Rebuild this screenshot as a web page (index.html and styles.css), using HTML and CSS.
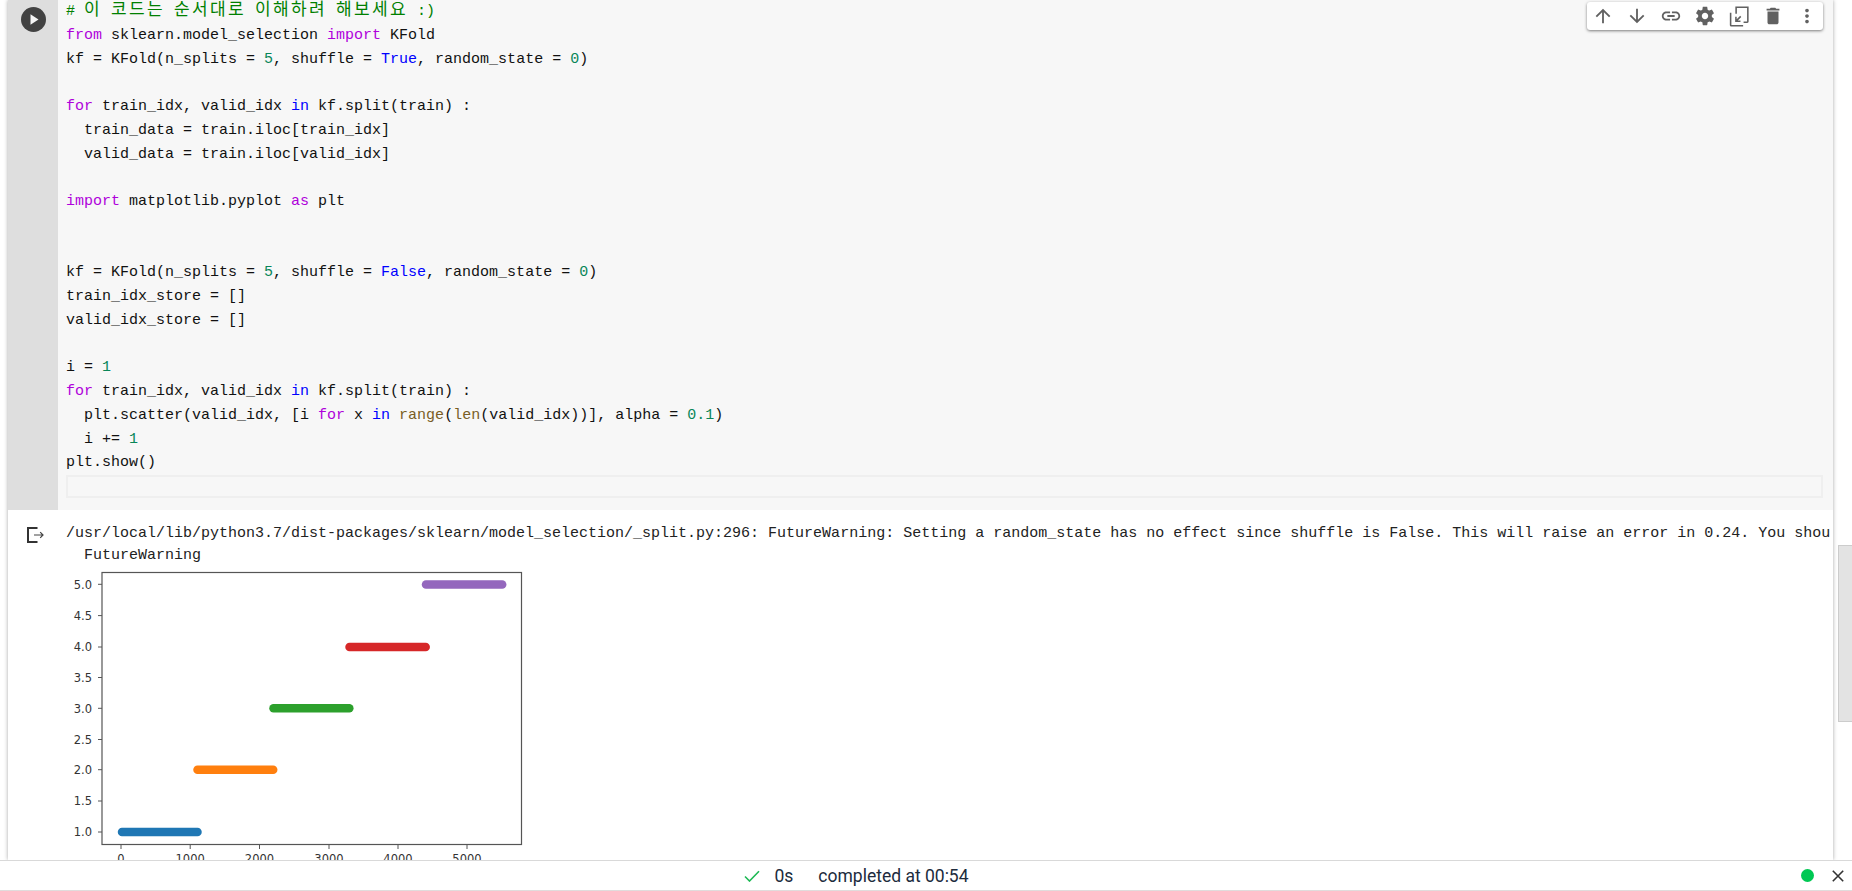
FILE: index.html
```html
<!DOCTYPE html>
<html lang="ko">
<head>
<meta charset="utf-8">
<title>Colab cell</title>
<link rel="stylesheet" href="styles.css">
</head>
<body>
<div class="main">
  <div class="cell">
    <div class="code-row">
      <div class="gutter">
        <button class="play" aria-label="Run cell">
          <svg viewBox="0 0 24 24" width="25" height="25"><circle cx="12" cy="12" r="12" fill="#424242"/><path d="M9.100 7v10l7.700-5z" fill="#f5f5f5"/></svg>
        </button>
      </div>
      <div class="editor">
<pre class="code"><span class="c"># <span class="h">이</span> <span class="h">코드는</span> <span class="h">순서대로</span> <span class="h">이해하려</span> <span class="h">해보세요</span> :)</span>
<span class="k">from</span> sklearn.model_selection <span class="k">import</span> KFold
kf = KFold(n_splits = <span class="n">5</span>, shuffle = <span class="b">True</span>, random_state = <span class="n">0</span>)

<span class="k">for</span> train_idx, valid_idx <span class="b">in</span> kf.split(train) :
  train_data = train.iloc[train_idx]
  valid_data = train.iloc[valid_idx]

<span class="k">import</span> matplotlib.pyplot <span class="k">as</span> plt


kf = KFold(n_splits = <span class="n">5</span>, shuffle = <span class="b">False</span>, random_state = <span class="n">0</span>)
train_idx_store = []
valid_idx_store = []

i = <span class="n">1</span>
<span class="k">for</span> train_idx, valid_idx <span class="b">in</span> kf.split(train) :
  plt.scatter(valid_idx, [i <span class="k">for</span> x <span class="b">in</span> <span class="f">range</span>(<span class="f">len</span>(valid_idx))], alpha = <span class="n">0.1</span>)
  i += <span class="n">1</span>
plt.show()</pre>
        <div class="empty-line"></div>
      </div>
    </div>
    <div class="output-row">
      <div class="output-icon">
        <svg viewBox="0 0 18 16" width="18" height="16"><path d="M10.500 1H1v14h9.500" fill="none" stroke="#333" stroke-width="2"/><path d="M7 8h9M13.200 5.200 16 8l-2.800 2.800" fill="none" stroke="#444" stroke-width="1.200"/></svg>
      </div>
      <div class="output">
<pre class="out">/usr/local/lib/python3.7/dist-packages/sklearn/model_selection/_split.py:296: FutureWarning: Setting a random_state has no effect since shuffle is False. This will raise an error in 0.24. You shou
  FutureWarning</pre>
        <svg class="chart" viewBox="66 566 480 300" width="480" height="300">
          <rect x="102" y="573.500" width="419.500" height="272" fill="#fff" stroke="#555" stroke-width="1.200"/>
          <g class="ticks">
            <path d="M98 585.300h4M98 616.600h4M98 648h4M98 678.500h4M98 709.300h4M98 740.500h4M98 770.700h4M98 802h4M98 833h4"/>
            <path d="M121 846v4M190.200 846v4M259.500 846v4M329 846v4M398 846v4M467 846v4"/>
          </g>
          <g class="bars">
            <line x1="122" x2="197.500" y1="833" y2="833" stroke="#1f77b4"/>
            <line x1="197.500" x2="273.200" y1="770.700" y2="770.700" stroke="#ff7f0e"/>
            <line x1="273.500" x2="349.300" y1="709.300" y2="709.300" stroke="#2ca02c"/>
            <line x1="349.500" x2="425.700" y1="648" y2="648" stroke="#d62728"/>
            <line x1="426" x2="502.200" y1="585.500" y2="585.500" stroke="#9467bd"/>
          </g>
          <g class="ylabels">
            <text x="92" y="589.500">5.0</text>
            <text x="92" y="620.800">4.5</text>
            <text x="92" y="652.200">4.0</text>
            <text x="92" y="682.700">3.5</text>
            <text x="92" y="713.500">3.0</text>
            <text x="92" y="744.700">2.5</text>
            <text x="92" y="774.900">2.0</text>
            <text x="92" y="806.200">1.5</text>
            <text x="92" y="837.200">1.0</text>
          </g>
          <g class="xlabels">
            <text x="121" y="864">0</text>
            <text x="190.200" y="864">1000</text>
            <text x="259.500" y="864">2000</text>
            <text x="329" y="864">3000</text>
            <text x="398" y="864">4000</text>
            <text x="467" y="864">5000</text>
          </g>
        </svg>
      </div>
    </div>
    <div class="toolbar">
      <svg viewBox="0 0 24 24"><path d="M4 12l1.410 1.410L11 7.830V20h2V7.830l5.580 5.590L20 12l-8-8-8 8z"/></svg>
      <svg viewBox="0 0 24 24"><path d="M20 12l-1.410-1.410L13 16.170V4h-2v12.170l-5.580-5.590L4 12l8 8 8-8z"/></svg>
      <svg viewBox="0 0 24 24"><path d="M3.900 12c0-1.710 1.390-3.100 3.100-3.100h4V7H7c-2.760 0-5 2.240-5 5s2.240 5 5 5h4v-1.900H7c-1.710 0-3.100-1.390-3.100-3.100zM8 13h8v-2H8v2zm9-6h-4v1.900h4c1.710 0 3.100 1.390 3.100 3.100s-1.390 3.100-3.100 3.100h-4V17h4c2.760 0 5-2.240 5-5s-2.240-5-5-5z"/></svg>
      <svg viewBox="0 0 24 24"><path d="M19.430 12.980c.04-.32.07-.64.07-.98s-.03-.66-.07-.98l2.110-1.650c.19-.15.24-.42.12-.64l-2-3.460c-.12-.22-.39-.3-.61-.22l-2.490 1c-.52-.4-1.080-.73-1.690-.98l-.38-2.650C14.460 2.180 14.250 2 14 2h-4c-.25 0-.46.18-.49.42l-.38 2.650c-.61.25-1.170.59-1.690.98l-2.490-1c-.23-.09-.49 0-.61.22l-2 3.460c-.13.22-.07.49.12.64l2.110 1.650c-.04.32-.07.65-.07.98s.03.66.07.98l-2.110 1.650c-.19.15-.24.42-.12.64l2 3.460c.12.22.39.3.61.22l2.490-1c.52.4 1.080.73 1.690.98l.38 2.650c.03.24.24.42.49.42h4c.25 0 .46-.18.49-.42l.38-2.650c.61-.25 1.170-.59 1.690-.98l2.490 1c.23.09.49 0 .61-.22l2-3.460c.12-.22.07-.49-.12-.64l-2.110-1.650zM12 15.500c-1.930 0-3.500-1.570-3.500-3.500s1.570-3.500 3.500-3.500 3.500 1.570 3.500 3.500-1.570 3.500-3.500 3.500z"/></svg>
      <svg viewBox="0 0 24 24"><path d="M8 1.500h14.500v16.500a1.500 1.500 0 0 1-1.500 1.500h-4V18h3.800V3.200H9.700v6.300H8zM2 8.500h1.700v13.300h12.800v1.700H3.500A1.500 1.500 0 0 1 2 22z"/><path d="M13.300 11.800l1.200 1.200-3.800 3.800h2.900v1.700H7.800v-5.800h1.700v2.900z"/></svg>
      <svg viewBox="0 0 24 24"><path d="M6 19c0 1.100.9 2 2 2h8c1.100 0 2-.9 2-2V7H6v12zM19 4h-3.500l-1-1h-5l-1 1H5v2h14V4z"/></svg>
      <svg viewBox="0 0 24 24"><path d="M12 8c1.100 0 2-.9 2-2s-.9-2-2-2-2 .9-2 2 .9 2 2 2zm0 2c-1.100 0-2 .9-2 2s.9 2 2 2 2-.9 2-2-.9-2-2-2zm0 6c-1.100 0-2 .9-2 2s.9 2 2 2 2-.9 2-2-.9-2-2-2z"/></svg>
    </div>
  </div>
  <div class="scroll-thumb"></div>
</div>
<footer class="status">
  <div class="status-center">
    <svg class="check" viewBox="0 0 16 12" width="16" height="12"><path d="M1 6.500 5.500 11 15 1.200" fill="none" stroke="#1db954" stroke-width="1.600"/></svg>
    <span class="elapsed">0s</span>
    <span class="done">completed at 00:54</span>
  </div>
  <div class="status-right">
    <span class="dot"></span>
    <svg class="close" viewBox="0 0 12 12" width="12" height="12"><path d="M.8.800l10.400 10.400M11.200.800.800 11.200" stroke="#333" stroke-width="1.600" fill="none"/></svg>
  </div>
</footer>
</body>
</html>
```

FILE: styles.css
```css
* { box-sizing: border-box; }
html, body { height: 100%; }
body {
  margin: 0;
  display: flex;
  flex-direction: column;
  overflow: hidden;
  background: #fff;
  color: #000;
  font-family: "Liberation Mono", "Noto Sans CJK KR", monospace;
}
.main {
  position: relative;
  flex: 1;
  min-height: 0;
  overflow: hidden;
  padding-left: 8px;
  padding-right: 19px;
}
.cell {
  position: relative;
  height: 100%;
  box-shadow: 0 0 4px rgba(0, 0, 0, .35);
  background: #fff;
}
.code-row { display: flex; height: 510px; }
.gutter {
  width: 50px;
  flex: none;
  background: #dedede;
  display: flex;
  justify-content: center;
  padding-top: 7px;
}
.play {
  border: 0;
  padding: 0;
  background: none;
  width: 25px;
  height: 25px;
  display: block;
}
.editor {
  flex: 1;
  background: #f7f7f7;
  padding: 0 10px 0 8px;
}
.code {
  margin: 0;
  font: 15px/23.75px "Liberation Mono", "Noto Sans CJK KR", monospace;
  color: #111;
}
.c { color: #008000; }
.h { font-size: 17px; letter-spacing: 2.360px; line-height: 1; }
.k { color: #af00db; }
.b { color: #0000ff; }
.n { color: #098658; }
.f { color: #795e26; }
.empty-line {
  height: 23px;
  border: 2px solid #efefef;
}
.output-row { display: flex; }
.output-icon { width: 50px; flex: none; padding: 17px 0 0 19px; }
.output { flex: 1; min-width: 0; padding: 13px 0 0 8px; }
.out {
  margin: 0;
  font: 15px/22px "Liberation Mono", monospace;
  color: #222;
  white-space: pre;
}
.chart { display: block; margin-top: -2px; }
.ticks path { stroke: #555; stroke-width: 1; fill: none; }
.bars line { stroke-width: 8.500; stroke-linecap: round; }
.ylabels text, .xlabels text {
  font: 11.500px "DejaVu Sans", sans-serif;
  fill: #333;
}
.ylabels text { text-anchor: end; }
.xlabels text { text-anchor: middle; }
.toolbar {
  position: absolute;
  left: 1579px;
  top: 2px;
  width: 236px;
  height: 28px;
  background: #fff;
  border-radius: 3px;
  box-shadow: 0 1px 3px rgba(0, 0, 0, .5);
  display: flex;
  align-items: center;
  padding-left: 5px;
  gap: 12px;
}
.toolbar svg { width: 22px; height: 22px; fill: #616161; flex: none; }
.scroll-thumb {
  position: absolute;
  right: 0;
  top: 545px;
  width: 14px;
  height: 177px;
  background: #e3e3e3;
  border: 1px solid #ccc;
  border-right: 0;
}
.status {
  position: relative;
  flex: none;
  height: 31px;
  border-top: 1px solid #d9d9d9;
  border-bottom: 1px solid #e0dcdc;
  background: #fff;
  display: flex;
  justify-content: center;
  align-items: center;
  font: 17.500px "Roboto", sans-serif;
  color: #202b3c;
}
.status-center { display: flex; align-items: center; padding-right: 139px; }
.check { margin-right: 14px; }
.elapsed { margin-right: 25px; }
.status-right {
  position: absolute;
  right: 8px;
  top: 0;
  bottom: 0;
  display: flex;
  align-items: center;
  gap: 18px;
}
.dot { width: 13px; height: 13px; border-radius: 50%; background: #00c853; }
```
